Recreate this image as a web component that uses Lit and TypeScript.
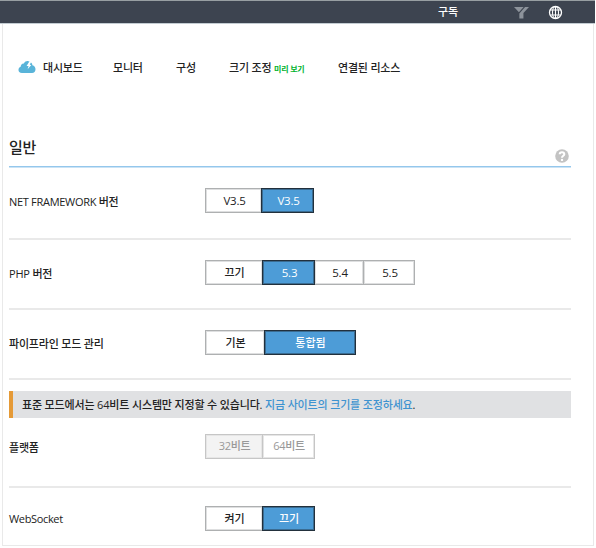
import { LitElement, html, css } from "lit";
import { customElement, property } from "lit/decorators.js";

interface Option {
  text: string;
  width: number;
  active?: boolean;
  latin?: boolean;
}

@customElement("option-group")
class OptionGroup extends LitElement {
  @property({ attribute: false }) options: Option[] = [];
  @property({ type: Boolean, reflect: true }) disabled = false;

  static styles = css`
    :host { display: flex; height: 25px; }
    .option {
      box-sizing: border-box;
      height: 25px;
      border: 1px solid #aeb0b1;
      border-right-width: 0;
      box-shadow: inset 0 0 0 1px #dedfe0;
      display: flex;
      align-items: center;
      justify-content: center;
      background: #fff;
      color: #222;
      padding-left: 1px;
      white-space: nowrap;
    }
    .option:last-child { border-right-width: 1px; }
    .latin { padding-left: 2px; font-size: 11.5px; letter-spacing: -0.25px; }
    .active { background: #4d9cd7; color: #fff; border: 1px solid #22303c; box-shadow: inset 0 0 0 1px #3a6c92; }
    .active + .option { border-left-width: 0; }
    :host([disabled]) .option {
      color: #999;
      border-color: #c6c6c6;
      box-shadow: inset 0 0 0 1px #e6e6e6;
      padding-bottom: 1px;
      letter-spacing: -0.3px;
    }
    :host([disabled]) .option:first-child { background: #f3f3f3; }
  `;

  render() {
    return this.options.map(
      (o) => html`<div class="option ${o.active ? "active" : ""} ${o.latin ? "latin" : ""}" style="width:${o.width}px">${o.text}</div>`
    );
  }
}

@customElement("app-root")
class AppRoot extends LitElement {
  static styles = css`
    :host {
      display: block;
      width: 596px;
      height: 548px;
      overflow: hidden;
      background: #fff;
      color: #222;
      font: 500 11px/16px "Open Sans", "Noto Sans CJK KR", sans-serif;
    }
    .bar {
      box-sizing: border-box;
      width: 595px;
      height: 24px;
      background: #3d4450;
      border-top: 1px solid #989fa2;
      border-bottom: 1px solid #c3ccd2;
      display: flex;
      align-items: center;
      color: #fff;
      padding-left: 438px;
    }
    .subscription { width: 76px; }
    .filter { width: 15px; height: 13px; margin-right: 19px; margin-top: 1px; }
    .globe { width: 15px; height: 15px; margin-top: 1px; }
    .panel {
      box-sizing: border-box;
      margin-left: 2px;
      width: 592px;
      height: 522px;
      border: 1px solid #e9e9e9;
      border-top: 0;
      padding: 0 22px 0 6px;
    }
    .nav {
      display: flex;
      align-items: center;
      height: 16px;
      padding: 36px 0 0 9px;
      white-space: nowrap;
      letter-spacing: -0.2px;
    }
    .cloud { width: 18px; height: 14px; margin-right: 7px; margin-top: -2px; }
    .dashboard { width: 70px; }
    .monitor { width: 63px; }
    .configure { width: 53px; }
    .scale { width: 109px; }
    .preview { font-size: 8px; font-weight: 700; color: #00b22d; letter-spacing: -0.2px; }
    .heading {
      box-sizing: border-box;
      height: 91px;
      display: flex;
      align-items: flex-end;
      justify-content: space-between;
      border-bottom: 1px solid #94c7ec;
      box-shadow: 0 1px 0 #cbe3f5;
      padding: 0 2px 3px 0;
      margin-bottom: 1px;
    }
    .title { font-size: 15px; line-height: 22px; margin-bottom: 5px; letter-spacing: -0.2px; }
    .help { width: 14px; height: 14px; }
    .row {
      box-sizing: border-box;
      height: 70px;
      border-bottom: 2px solid #e9e9e9;
      display: flex;
      align-items: flex-start;
      padding-top: 20px;
    }
    .row.first { height: 72px; }
    .label {
      width: 196px;
      height: 25px;
      padding-top: 1px;
      display: flex;
      align-items: center;
      white-space: nowrap;
      letter-spacing: -0.2px;
    }
    .first .label { letter-spacing: -0.3px; }
    .socket .label { padding-top: 0; letter-spacing: -0.35px; }
    .notice {
      box-sizing: border-box;
      height: 27px;
      margin-top: 11px;
      border-left: 4px solid #e59a37;
      background: #e0e1e3;
      padding-left: 9px;
      line-height: 27px;
      white-space: nowrap;
      letter-spacing: -0.16px;
    }
    .link { color: #3e93d0; }
    .row.platform { padding-top: 16px; }
    .row.socket { border: 0; padding-top: 18px; height: 50px; }
  `;

  row(cls: string, label: string, options: Option[], disabled = false) {
    return html`<div class="row ${cls}">
      <div class="label">${label}</div>
      <option-group .options=${options} ?disabled=${disabled}></option-group>
    </div>`;
  }

  render() {
    return html`
      <div class="bar">
        <span class="subscription">구독</span>
        <svg class="filter" viewBox="0 0 14 13" preserveAspectRatio="none">
          <path fill="#8d939b" d="M0 1H9L4.6 6.3Z" />
          <path fill="#8d939b" d="M10.3 1H14L8.8 7V12.5H5V7.4Z" />
        </svg>
        <svg class="globe" viewBox="0 0 14 14" fill="none" stroke="#fff" stroke-width="1.2">
          <circle cx="7" cy="7" r="5.6" />
          <ellipse cx="7" cy="7" rx="2.8" ry="5.6" stroke-width="1" />
          <path d="M7 1V13M1.8 4.7H12.2M1.8 9.3H12.2" stroke-width="1" />
        </svg>
      </div>
      <div class="panel">
        <div class="nav">
          <svg class="cloud" viewBox="0 0 18 14">
            <path fill="#59b4d9" d="M4 13C1.5 13 .3 11.5 .5 9.5C.6 8 1.7 7 2.7 6.7C2.7 4.5 4 3.2 5.9 3.4C7 1.4 8.7.8 10.5 1.2C12.7 1.5 14.4 3.2 14.4 5.3C16.4 5.8 17.5 7.4 17.5 9.3C17.5 11.5 16.2 13 14 13Z" />
            <path fill="#fff" d="M11.5 1.2L8.6 6L10.6 6L9.6 9.2L13.3 4.9L11.7 4.8L13.4 1.6Z" />
          </svg>
          <span class="dashboard">대시보드</span>
          <span class="monitor">모니터</span>
          <span class="configure">구성</span>
          <span class="scale">크기 조정 <span class="preview">미리 보기</span></span>
          <span>연결된 리소스</span>
        </div>
        <div class="heading">
          <span class="title">일반</span>
          <svg class="help" viewBox="0 0 14 14">
            <circle cx="7" cy="7" r="6.8" fill="#c3c3c3" />
            <path d="M4.7 5.3C4.7 2.6 9.3 2.7 9.3 5.2C9.3 6.8 7 6.8 7 8.8" fill="none" stroke="#fff" stroke-width="2" />
            <circle cx="7" cy="10.9" r="1.2" fill="#fff" />
          </svg>
        </div>
        ${this.row("first", "NET FRAMEWORK 버전", [
          { text: "V3.5", width: 56, latin: true },
          { text: "V3.5", width: 53, active: true, latin: true },
        ])}
        ${this.row("", "PHP 버전", [
          { text: "끄기", width: 57 },
          { text: "5.3", width: 53, active: true, latin: true },
          { text: "5.4", width: 48, latin: true },
          { text: "5.5", width: 52, latin: true },
        ])}
        ${this.row("", "파이프라인 모드 관리", [
          { text: "기본", width: 59 },
          { text: "통합됨", width: 92, active: true },
        ])}
        <div class="notice">표준 모드에서는 64비트 시스템만 지정할 수 있습니다. <span class="link">지금 사이트의 크기를 조정하세요</span>.</div>
        ${this.row("platform", "플랫폼", [
          { text: "32비트", width: 57 },
          { text: "64비트", width: 53 },
        ], true)}
        ${this.row("socket", "WebSocket", [
          { text: "켜기", width: 57 },
          { text: "끄기", width: 53, active: true },
        ])}
      </div>
    `;
  }
}
